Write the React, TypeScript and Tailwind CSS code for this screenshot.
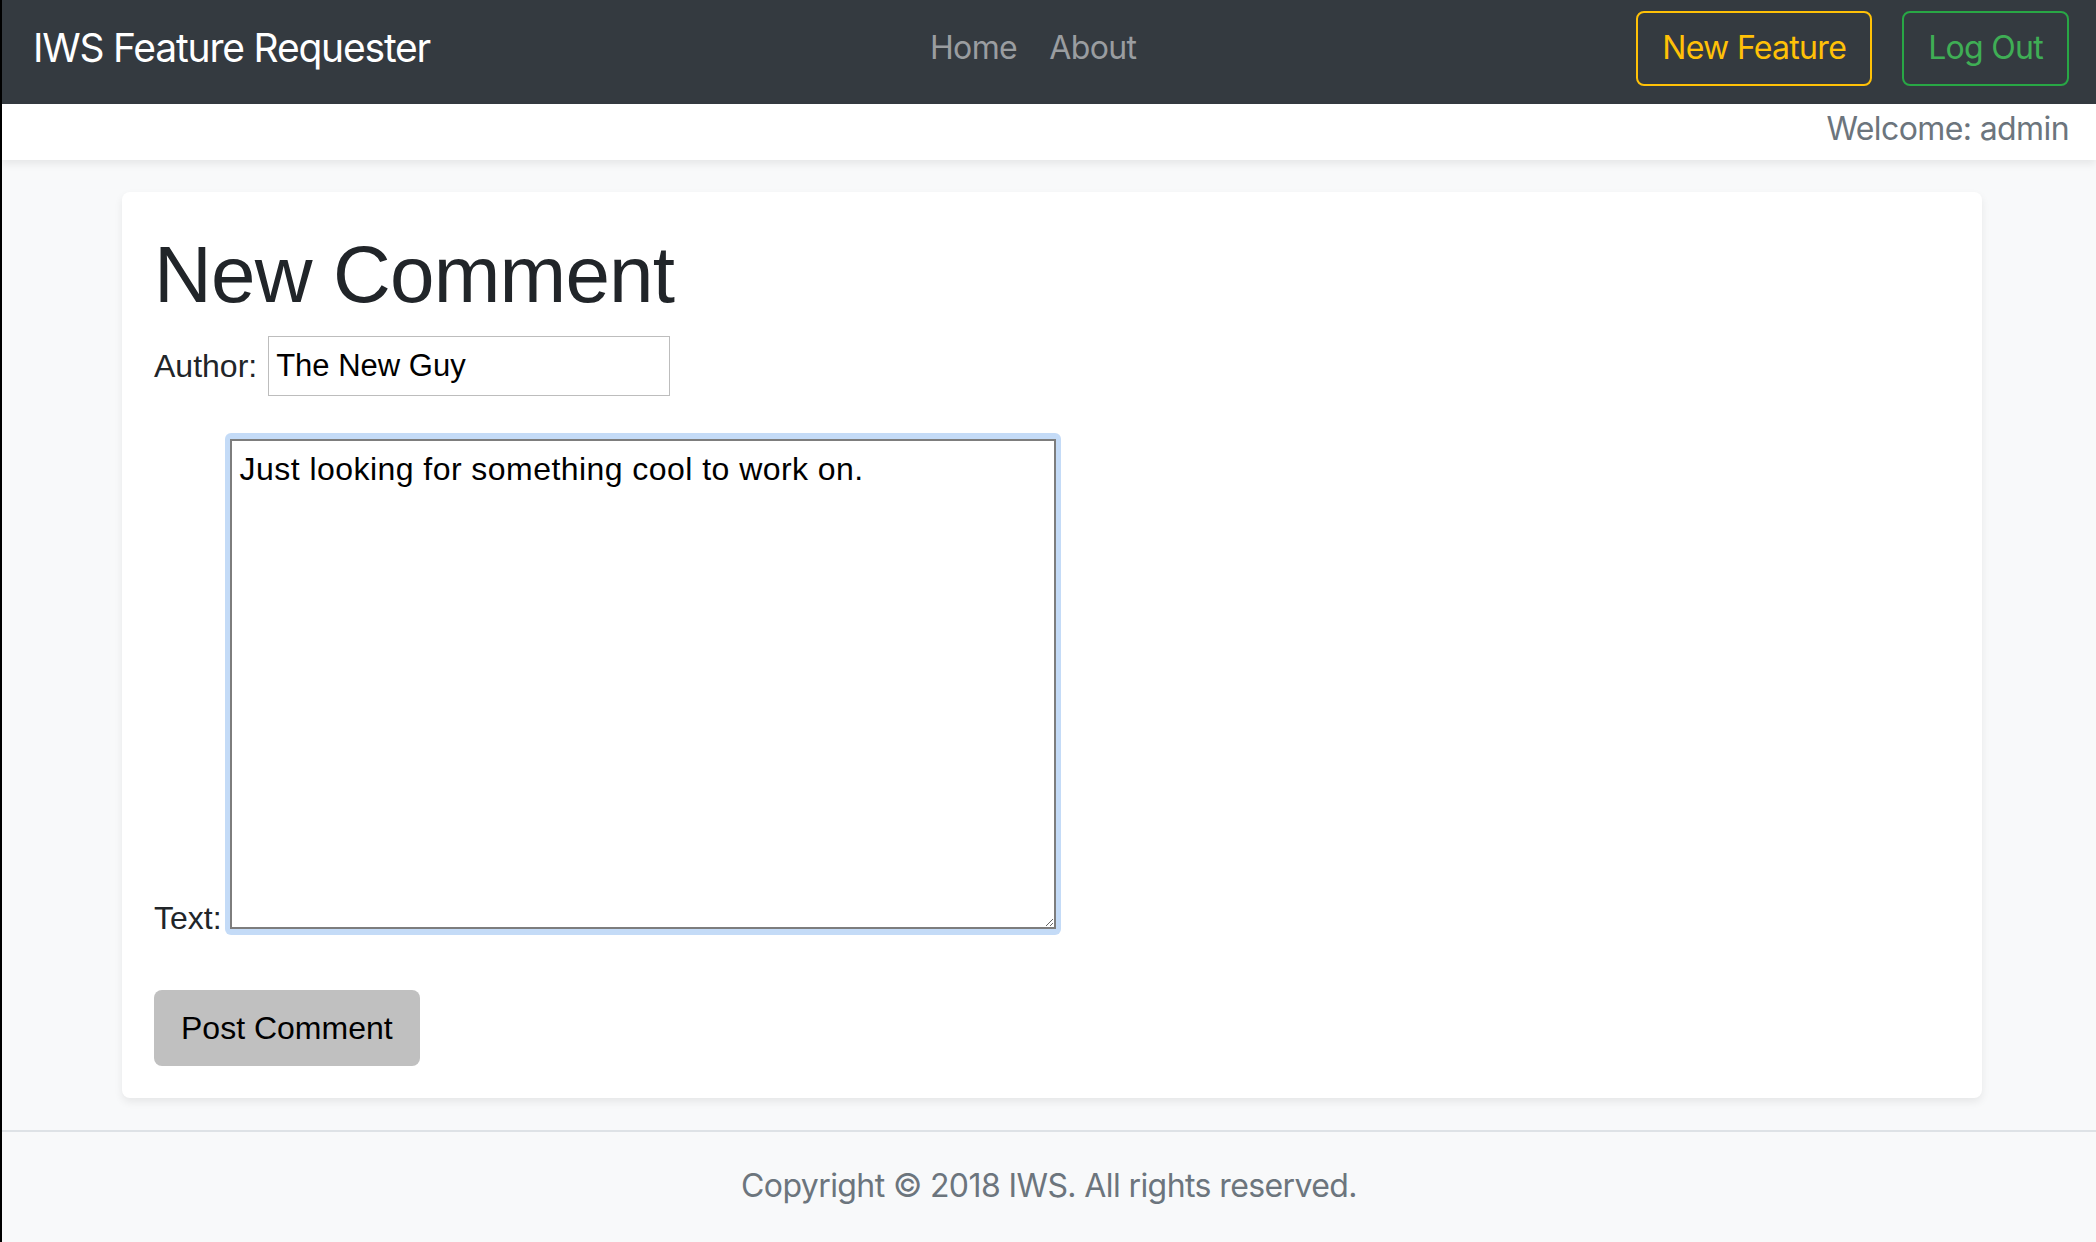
import React, { useEffect, useRef } from 'react';

const sf = { fontFamily: 'Inter, "Noto Sans", sans-serif' };
const helv = { fontFamily: '"Liberation Sans", Arial, sans-serif' };

const NavBar = () => (
  <header className="flex h-[104px] items-center bg-[#343a40] pb-[8px] pl-[31px] pr-[27px]" style={sf}>
    <a href="#" className="text-[39px] leading-[60px] text-white tracking-[-1.2px]">IWS Feature Requester</a>
    <nav className="flex flex-1 justify-center">
      <a href="#" className="px-[16px] text-[32px] leading-[48px] text-[#9a9da0] tracking-[-0.6px]">Home</a>
      <a href="#" className="px-[16px] text-[32px] leading-[48px] text-[#9a9da0] tracking-[-0.6px]">About</a>
    </nav>
    <div className="flex gap-[30px]">
      <button className="flex h-[75px] items-center rounded-[8px] border-2 border-[#ffc107] px-[24px] text-[32px] text-[#ffc107] tracking-[-0.7px]">
        New Feature
      </button>
      <button className="flex h-[75px] items-center rounded-[8px] border-2 border-[#28a745] px-[24px] text-[32px] text-[#3fae55] tracking-[-0.7px]">
        Log Out
      </button>
    </div>
  </header>
);

const CommentForm = () => {
  const textRef = useRef<HTMLTextAreaElement>(null);

  useEffect(() => {
    const el = textRef.current;
    if (el) {
      el.focus();
      el.setSelectionRange(el.value.length, el.value.length);
    }
  }, []);

  return (
    <section className="ml-[120px] w-[1860px] rounded-[8px] bg-white px-[32px] pt-[35px] pb-[32px] shadow-[0_4px_8px_rgba(0,0,0,0.075)]" style={helv}>
      <h1 className="mb-[13px] text-[80px] leading-[96px] text-[#212529] tracking-[-0.8px]">New Comment</h1>

      <div className="flex items-center gap-[11px]">
        <label className="text-[32px] leading-[32px] text-[#212529]">Author:</label>
        <input
          defaultValue="The New Guy"
          className="h-[60px] w-[402px] border border-[#bdbdbd] bg-white pl-[7px] text-[31px] leading-[31px] text-black outline-none"
          style={helv}
        />
      </div>

      <div className="mt-[37px] flex items-end gap-[3px]">
        <label className="text-[32px] leading-[34px] text-[#212529]">Text:</label>
        <div className="rounded-[6px] bg-[#c4dbf7] px-[5px] py-[6px]">
          <textarea
            ref={textRef}
            defaultValue="Just looking for something cool to work on."
            className="block h-[490px] w-[826px] border-2 border-[#7d7d7d] bg-white pl-[8px] pr-[4px] pt-[4px] text-[32px] leading-[48px] tracking-[0.45px] text-black caret-black outline-none"
            style={helv}
          />
        </div>
      </div>

      <button className="mt-[55px] flex h-[76px] items-center rounded-[8px] bg-[#c0c0c0] px-[27px] text-[32px] leading-none text-black">
        Post Comment
      </button>
    </section>
  );
};

export default function App() {
  return (
    <div className="min-h-[1242px] border-l-2 border-black bg-[#f8f9fa]">
      <NavBar />
      <div className="relative z-10 flex h-[56px] justify-end bg-white pt-[1px] pr-[27px] shadow-[0_4px_8px_rgba(0,0,0,0.075)]" style={sf}>
        <span className="text-[32px] leading-[48px] text-[#6c757d] tracking-[-0.6px]">Welcome: admin</span>
      </div>
      <main className="py-[32px]">
        <CommentForm />
      </main>
      <footer className="flex h-[110px] items-center justify-center border-t-2 border-[#dee2e6]" style={sf}>
        <span className="text-[32px] leading-[48px] text-[#6c757d] tracking-[-0.6px]">Copyright © 2018 IWS. All rights reserved.</span>
      </footer>
    </div>
  );
}
